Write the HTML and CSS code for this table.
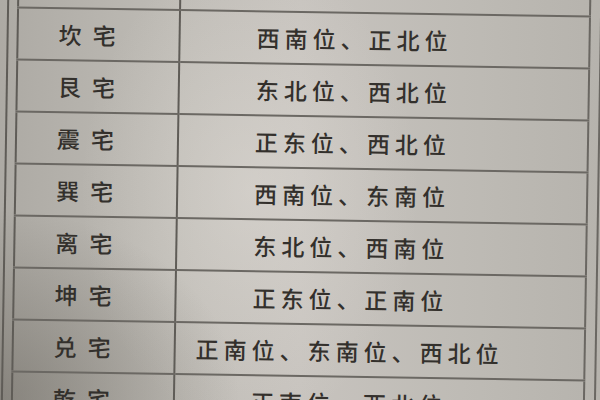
FILE: index.html
```html
<!DOCTYPE html>
<html lang="zh">
<head>
<meta charset="utf-8">
<title>八宅吉位表</title>
<link rel="stylesheet" href="styles.css">
</head>
<body>
<div class="page">
  <div class="frame">
    <table class="grid">
      <tr class="head"><td class="name"></td><td class="dirs"></td></tr>
      <tr><td class="name">坎宅</td><td class="dirs">西南位、正北位</td></tr>
      <tr><td class="name">艮宅</td><td class="dirs">东北位、西北位</td></tr>
      <tr><td class="name">震宅</td><td class="dirs">正东位、西北位</td></tr>
      <tr><td class="name">巽宅</td><td class="dirs">西南位、东南位</td></tr>
      <tr><td class="name">离宅</td><td class="dirs">东北位、西南位</td></tr>
      <tr><td class="name">坤宅</td><td class="dirs">正东位、正南位</td></tr>
      <tr><td class="name">兑宅</td><td class="dirs">正南位、东南位、西北位</td></tr>
      <tr><td class="name">乾宅</td><td class="dirs">正南位、西北位</td></tr>
    </table>
  </div>
</div>
</body>
</html>
```

FILE: styles.css
```css
html, body {
  margin: 0;
  padding: 0;
}

.page {
  width: 600px;
  height: 400px;
  overflow: hidden;
  background:
    radial-gradient(ellipse 240px 190px at 0% 100%, rgba(60, 56, 48, 0.34), rgba(60, 56, 48, 0) 100%),
    radial-gradient(ellipse 170px 240px at 250px 190px, rgba(236, 232, 226, 0.35), rgba(236, 232, 226, 0) 100%),
    linear-gradient(to right, #adaaa4 0%, #bfbcb6 30%, #c7c3be 50%, #bdbab4 80%, #b6b3ad 100%);
  font-family: "Noto Sans CJK SC", "Noto Sans CJK TC", sans-serif;
  color: #33302c;
}

.frame {
  width: 574px;
  margin: -41px 0 0 4px;
  padding: 0 9px 0 8px;
  border-left: 2px solid #5f5c57;
  border-right: 2px solid #6a6762;
  height: 520px;
  transform: rotate(0.9deg);
  transform-origin: 300px 246px;
}

.grid {
  width: 100%;
  border-collapse: collapse;
  border-left: 2px solid #5f5c57;
  border-right: 2px solid #6a6762;
}

.grid td {
  height: 50px;
  padding: 0;
  border-top: 2px solid #6b6863;
  border-bottom: 2px solid #6b6863;
  font-size: 23px;
  font-weight: 500;
  line-height: 1;
  text-align: center;
  vertical-align: middle;
}

.grid .name {
  width: 148px;
  padding-right: 12px;
  letter-spacing: 11px;
  border-right: 2px solid #5f5c57;
}

.grid .dirs {
  padding-right: 60px;
  letter-spacing: 5px;
}
```
